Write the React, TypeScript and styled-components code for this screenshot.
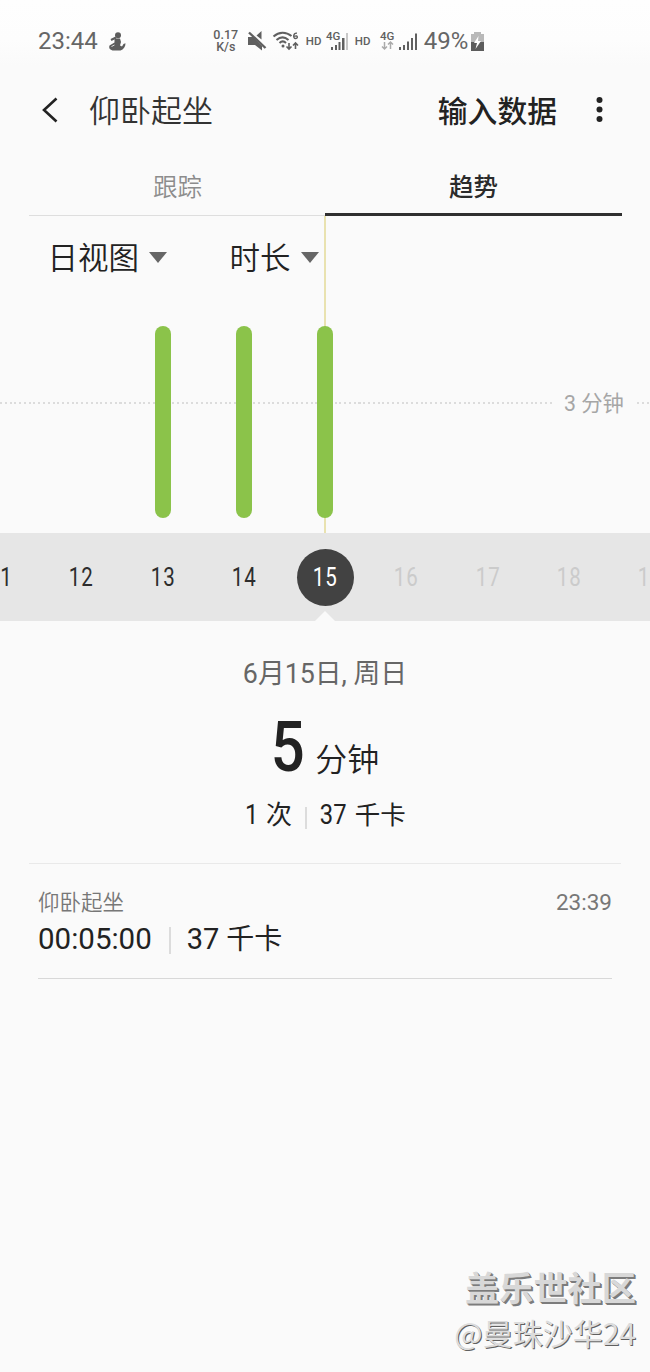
import React from "react";
import styled, { createGlobalStyle } from "styled-components";

const GlobalStyle = createGlobalStyle`
  *, *::before, *::after { box-sizing: border-box; }
  body {
    margin: 0;
    background: #fafafa;
    color: #222;
    font-family: Roboto, "Noto Sans CJK SC", sans-serif;
  }
`;

const Screen = styled.main`
  position: relative;
  display: flex;
  flex-direction: column;
  width: 650px;
  height: 1372px;
  overflow: hidden;
  background: #fafafa;
  white-space: nowrap;
`;

const Label = styled.span<{ $size: number; $color?: string; $weight?: number }>`
  font-size: ${(p) => p.$size}px;
  color: ${(p) => p.$color ?? "#222"};
  font-weight: ${(p) => p.$weight ?? 400};
`;

const Narrow = styled(Label)<{ $scale?: number }>`
  display: inline-block;
  transform: scaleX(${(p) => p.$scale ?? 0.88});
`;

const StatusBar = styled.header`
  display: flex;
  align-items: center;
  height: 66px;
  padding: 16px 0 0 38px;
  line-height: 50px;
  background: linear-gradient(#fefefe, #fdfdfd 60%, #fafafa);
`;

const StatusIcon = styled.svg<{ $gap: number }>`
  flex: none;
  margin-left: ${(p) => p.$gap}px;
  overflow: visible;
`;

const Speed = styled.div`
  display: flex;
  flex-direction: column;
  align-items: center;
  width: 26px;
  margin-left: 87px;
  color: #606060;
  font-size: 12.5px;
  font-weight: 500;
  line-height: 12px;
`;

const Hd = styled.span<{ $gap: number }>`
  width: 16px;
  margin-left: ${(p) => p.$gap}px;
  color: #606060;
  font-size: 11.5px;
  font-weight: 500;
  line-height: 44px;
`;

const Battery = styled.span`
  margin-left: 6px;
  color: #666;
  font-size: 24px;
`;

const AppBar = styled.nav`
  display: flex;
  align-items: center;
  height: 88px;
  padding: 0 45px 0 41px;
`;

const Title = styled.h1`
  flex: 1;
  margin: 0 0 0 31px;
  padding-top: 4px;
  color: #333;
  font-size: 31px;
  font-weight: 350;
  line-height: 46px;
`;

const Action = styled.button`
  padding: 0 0 2px;
  border: 0;
  background: none;
  color: #222;
  font: 500 29.8px/86px "Noto Sans CJK SC", sans-serif;
`;

const Tabs = styled.div`
  display: flex;
  height: 62px;
  margin: 0 28px 0 29px;
`;

const Tab = styled.div<{ $active?: boolean }>`
  display: flex;
  flex: 1;
  justify-content: center;
  height: 62px;
  border-bottom: ${(p) => (p.$active ? "3.5px solid #303030" : "1px solid #dedede")};
  margin-left: ${(p) => (p.$active ? "-1px" : "0")};
  color: ${(p) => (p.$active ? "#2b2b2b" : "#8c8c8c")};
  font-size: 24.5px;
  font-weight: ${(p) => (p.$active ? 500 : 350)};
  line-height: 67px;
`;

const Chart = styled.section`
  position: relative;
  display: flex;
  flex-direction: column;
  height: 317px;
`;

const DayMarker = styled.div`
  position: absolute;
  top: 0;
  bottom: 0;
  left: 324px;
  width: 2px;
  background: #e9e2b0;
`;

const Filters = styled.div`
  display: flex;
  height: 83px;
  padding-left: 47.5px;
  line-height: 83px;
`;

const Filter = styled.div<{ $width: number }>`
  display: flex;
  align-items: center;
  gap: 10px;
  width: ${(p) => p.$width}px;

  span {
    padding-top: 2px;
  }
`;

const Arrow = styled.i`
  border: 9px solid transparent;
  border-top: 11px solid #666;
  border-bottom: 0;
`;

const Plot = styled.div`
  display: grid;
  grid-template-columns: repeat(9, 81.25px);
  justify-content: center;
  height: 234px;
  padding-top: 27px;
`;

const Bar = styled.div<{ $column: number }>`
  position: relative;
  grid-column: ${(p) => p.$column};
  grid-row: 1;
  justify-self: center;
  width: 16px;
  height: 192px;
  border-radius: 8px;
  background: #8bc34a;
`;

const Threshold = styled.div`
  position: absolute;
  top: 170px;
  left: 0;
  right: 0;
  display: flex;
  align-items: center;
  height: 34px;
`;

const Dots = styled.div<{ $width: number }>`
  width: ${(p) => p.$width}px;
  height: 2px;
  background: repeating-linear-gradient(90deg, #dcdcdc 0 2px, transparent 2px 4.78px);
`;

const ThresholdText = styled.div`
  width: 84px;
  padding: 1px 0 0 11px;
  color: #a6a6a6;
  font-size: 21.3px;
  line-height: 34px;
`;

const Days = styled.div`
  position: relative;
  display: grid;
  grid-template-columns: repeat(9, 81.25px);
  justify-content: center;
  align-items: center;
  justify-items: center;
  height: 88px;
  background: #e6e6e6;
`;

const Day = styled.div<{ $state?: "selected" | "future" }>`
  width: 57px;
  height: 57px;
  border-radius: 50%;
  background: ${(p) => (p.$state === "selected" ? "#424242" : "none")};
  color: ${(p) => (p.$state === "selected" ? "#fff" : p.$state === "future" ? "#cbcbcb" : "#2d2d2d")};
  font-size: 25px;
  line-height: 57px;
  text-align: center;

  span {
    display: inline-block;
    padding-left: 1.2px;
    letter-spacing: 1.2px;
    transform: scaleX(0.82);
  }
`;

const Pointer = styled.i`
  position: absolute;
  bottom: 0;
  left: 315px;
  border: 10px solid transparent;
  border-top: 0;
  border-bottom-color: #fafafa;
`;

const Summary = styled.section`
  display: flex;
  flex-direction: column;
  align-items: center;
  height: 242.5px;
  margin: 0 29px;
  padding-top: 33px;
  border-bottom: 1px solid #e9e9e9;
`;

const SummaryRow = styled.div<{ $height: number; $gap?: number }>`
  display: flex;
  align-items: baseline;
  gap: ${(p) => p.$gap ?? 0}px;
  height: ${(p) => p.$height}px;
  line-height: ${(p) => p.$height}px;
`;

const Total = styled(SummaryRow)`
  padding-right: 3px;
`;

const Separator = styled.i<{ $height: number; $margin: string }>`
  align-self: center;
  width: 2px;
  height: ${(p) => p.$height}px;
  margin: ${(p) => p.$margin};
  background: #dcdcdc;
`;

const Entry = styled.section`
  display: flex;
  flex-direction: column;
  height: 115.5px;
  margin: 0 38px;
  padding-top: 22px;
  border-bottom: 1px solid #d8d8d8;
`;

const EntryRow = styled.div<{ $height: number; $spread?: boolean }>`
  display: flex;
  align-items: baseline;
  justify-content: ${(p) => (p.$spread ? "space-between" : "flex-start")};
  height: ${(p) => p.$height}px;
  line-height: ${(p) => p.$height}px;
`;

const Watermark = styled.footer`
  display: flex;
  flex-direction: column;
  align-items: flex-end;
  margin-top: auto;
  padding: 0 14px 17px 0;
  font-family: "Noto Sans CJK SC", sans-serif;
`;

const WatermarkLine = styled.div<{ $size: number; $bold?: boolean }>`
  color: ${(p) => (p.$bold ? "#d8d8d8" : "#dcdcdc")};
  font-size: ${(p) => p.$size}px;
  font-weight: ${(p) => (p.$bold ? 700 : 400)};
  line-height: 46px;
  text-shadow: ${(p) => (p.$bold ? "1px 1px 0 #7c7c7c, 2px 2px 0 #7c7c7c" : "1px 1px 0 #606060")};
`;

const days: { text: string; state?: "selected" | "future" }[] = [
  { text: "11" },
  { text: "12" },
  { text: "13" },
  { text: "14" },
  { text: "15", state: "selected" },
  { text: "16", state: "future" },
  { text: "17", state: "future" },
  { text: "18", state: "future" },
  { text: "19", state: "future" },
];

export default function App() {
  return (
    <Screen>
      <GlobalStyle />
      <StatusBar>
        <Label $size={24} $color="#666">23:44</Label>
        <StatusIcon $gap={11} width="17" height="19" viewBox="0 0 17 19" fill="#5c5c5c">
          <circle cx="9" cy="3.200" r="3" />
          <path d="M5.500 6.500H11l1 3.500-1 3.500 2 1 1.500-2.500 2-.8c0 3.500-2 6.300-5 7.300H5c-4 0-5.500-2.500-4.500-5l5-3z" />
          <path d="M2 8l5-2.500" stroke="#5c5c5c" strokeWidth="2" />
          <path d="M2.500 14.500l3-1.500" stroke="#ddd" strokeWidth="1" fill="none" />
        </StatusIcon>
        <Speed>
          <span>0.17</span>
          <span>K/s</span>
        </Speed>
        <StatusIcon $gap={9} width="19" height="20" viewBox="0 0 19 20" fill="#606060">
          <path d="M0 6h5l9 9v4.500L7 14H0zM8.500 4.500L13.500 0v8.500z" />
          <path d="M1 1.500l16.500 15.500" stroke="#606060" strokeWidth="2.400" />
        </StatusIcon>
        <StatusIcon $gap={7} width="25" height="20" viewBox="0 0 25 20" fill="none" stroke="#606060" strokeWidth="2">
          <path d="M-.5 5.500C5 .5 12 .5 17.500 5M2.500 9c4-3.500 8-3.500 12 0M5.500 12c2-2 4.500-2 6.500 0" />
          <circle cx="9" cy="15" r="1.500" fill="#606060" stroke="none" />
          <path d="M15 12v6M12.500 15.500L15 18l2.500-2.500M21.500 18v-6M19 14.500l2.500-2.500 2.500 2.500" strokeWidth="1.600" />
          <path d="M23 2.200c-4-.5-4.200 5.300-1.500 5.300s2.500-3.800-1-2.200" strokeWidth="1.400" />
        </StatusIcon>
        <Hd $gap={7}>HD</Hd>
        <StatusIcon $gap={5} width="22" height="20" viewBox="0 0 22 20" fill="#606060">
          <text x="-1" y="9" fontSize="11.500" fontWeight="500">4G</text>
          <path d="M4 16h2v3H4zM8 14h2v5H8zM11.500 11h2v8h-2zM15 7h2.500v12H15z" />
          <path d="M19 2h2v17h-2z" fill="#c8c8c8" />
        </StatusIcon>
        <Hd $gap={6}>HD</Hd>
        <StatusIcon $gap={10} width="37" height="20" viewBox="0 0 37 20" fill="#606060">
          <text x="-1" y="9" fontSize="11.500" fontWeight="500">4G</text>
          <path d="M3.500 11v7M1 15.500l2.500 2.500L6 15.500M9.500 18v-7M7 13.500l2.500-2.500 2.500 2.500" fill="none" stroke="#aaa" strokeWidth="1.500" />
          <path d="M18 16h2v3h-2zM22 14h2v5h-2zM26 10.500h2V19h-2zM30 7h2v12h-2zM34 2.500h2V19h-2z" />
        </StatusIcon>
        <Battery>49%</Battery>
        <StatusIcon $gap={3} width="13" height="19" viewBox="0 0 13 19">
          <path d="M3 0h7v2h3v17H0V2h3z" fill="#b9b9b9" />
          <path d="M0 10h13v9H0z" fill="#5c5c5c" />
          <path d="M7.500 4L3 11h3l-1.500 6L10 9H7z" fill="#fff" />
        </StatusIcon>
      </StatusBar>

      <AppBar>
        <svg width="17" height="26" viewBox="0 0 17 26" fill="none" stroke="#222" strokeWidth="2.600">
          <path d="M15.500 1.500L3 13l12.500 11.500" />
        </svg>
        <Title>仰卧起坐</Title>
        <Action>输入数据</Action>
        <svg width="48" height="26" viewBox="0 0 48 26" fill="#222">
          <circle cx="42.500" cy="3" r="3" />
          <circle cx="42.500" cy="12.500" r="3" />
          <circle cx="42.500" cy="22" r="3" />
        </svg>
      </AppBar>

      <Tabs>
        <Tab>跟踪</Tab>
        <Tab $active>趋势</Tab>
      </Tabs>

      <Chart>
        <DayMarker />
        <Filters>
          <Filter $width={182}>
            <Label $size={30.5} $weight={350}>日视图</Label>
            <Arrow />
          </Filter>
          <Filter $width={95}>
            <Label $size={30.5} $weight={350}>时长</Label>
            <Arrow />
          </Filter>
        </Filters>
        <Threshold>
          <Dots $width={553} />
          <ThresholdText>3 分钟</ThresholdText>
          <Dots $width={13} />
        </Threshold>
        <Plot>
          <Bar $column={3} />
          <Bar $column={4} />
          <Bar $column={5} />
        </Plot>
      </Chart>

      <Days>
        {days.map((day) => (
          <Day key={day.text} $state={day.state}>
            <span>{day.text}</span>
          </Day>
        ))}
        <Pointer />
      </Days>

      <Summary>
        <SummaryRow $height={40}>
          <Label $size={26.8} $color="#666">6月15日, 周日</Label>
        </SummaryRow>
        <Total $height={108} $gap={8}>
          <Narrow $size={69.5} $weight={500} $scale={0.86}>5</Narrow>
          <Label $size={32} $weight={350}>分钟</Label>
        </Total>
        <SummaryRow $height={26}>
          <Narrow $size={27}>1</Narrow>
          <Label $size={26}>&nbsp;次</Label>
          <Separator $height={22} $margin="6px 11px 0 13px" />
          <Narrow $size={27}>37</Narrow>
          <Label $size={25.5}>&nbsp;千卡</Label>
        </SummaryRow>
      </Summary>

      <Entry>
        <EntryRow $height={32} $spread>
          <Label $size={21.5} $color="#777" $weight={350}>仰卧起坐</Label>
          <Label $size={22.5} $color="#777">23:39</Label>
        </EntryRow>
        <EntryRow $height={42}>
          <Label $size={29.5}>00:05:00</Label>
          <Separator $height={27} $margin="3px 16px 0 17px" />
          <Label $size={29}>37</Label>
          <Label $size={28}>&nbsp;千卡</Label>
        </EntryRow>
      </Entry>

      <Watermark>
        <WatermarkLine $size={34.2} $bold>盖乐世社区</WatermarkLine>
        <WatermarkLine $size={30}>@曼珠沙华24</WatermarkLine>
      </Watermark>
    </Screen>
  );
}
